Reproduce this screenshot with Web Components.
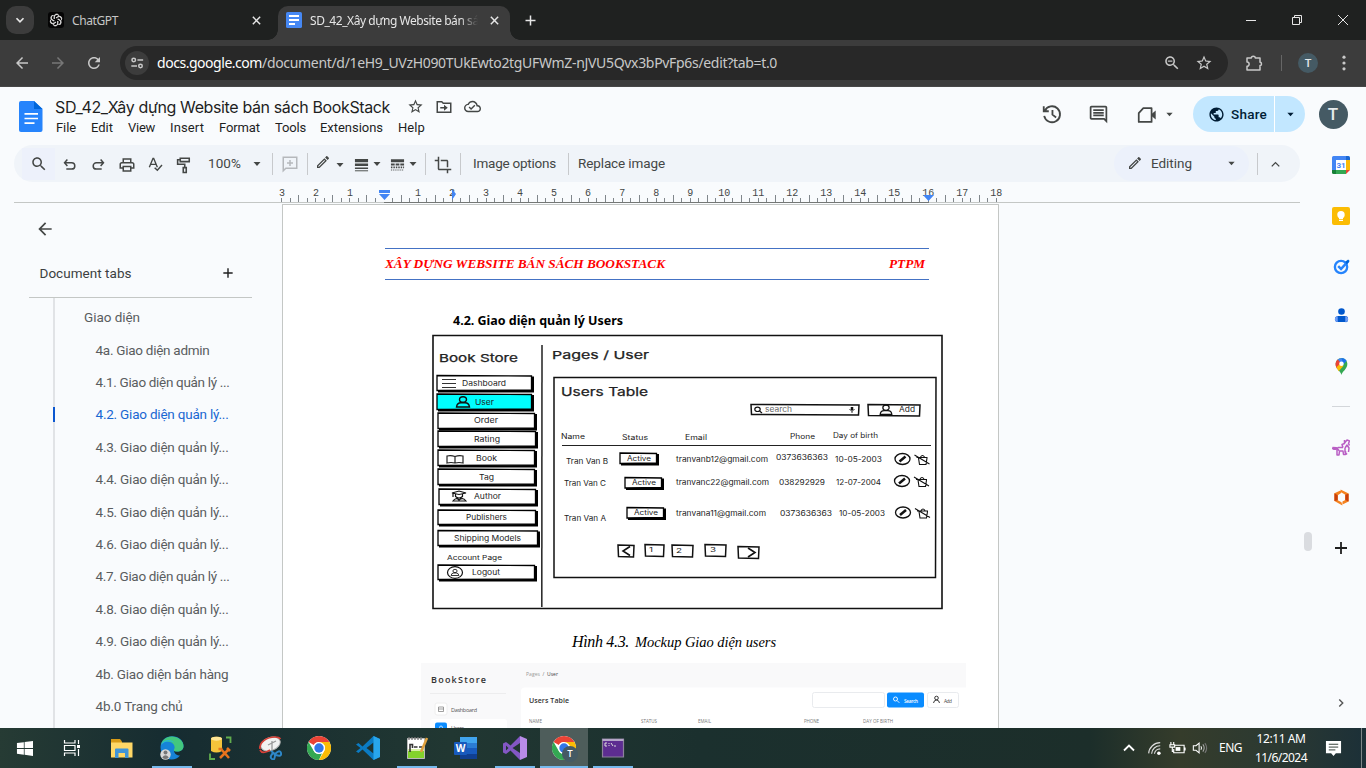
<!DOCTYPE html>
<html lang="vi"><head><meta charset="utf-8"><title>SD_42_Xây dựng Website bán sách BookStack</title>
<style>html,body{margin:0;height:768px;overflow:hidden;background:#f9fbfd}</style></head>
<body><desktop-app></desktop-app>
<script>
// Icon bodies: [viewBox size, markup]; "currentColor" follows the host colour.
const S='fill="none" stroke="currentColor" ';
const F=d=>`<path fill="currentColor" d="${d}"/>`;
const searchD='M15.5 14h-.79l-.28-.27C15.41 12.59 16 11.11 16 9.5 16 5.91 13.09 3 9.5 3S3 5.91 3 9.5 5.91 16 9.5 16c1.61 0 3.09-.59 4.23-1.57l.27.28v.79l5 4.99L20.49 19l-4.99-5zm-6 0C7.01 14 5 11.99 5 9.5S7.01 5 9.5 5 14 7.01 14 9.5 11.99 14 9.5 14z';
const chromeLogo=`<circle cx="12" cy="12" r="12" fill="#fff"/><path fill="#ea4335" d="M12 0a12 12 0 0 1 10.4 6H12a6 6 0 0 0-5.2 3L1.6 6A12 12 0 0 1 12 0z"/><path fill="#34a853" d="M1.6 6l5.2 9A6 6 0 0 0 12 18l3-.8L12 24A12 12 0 0 1 1.6 6z"/><path fill="#fbbc05" d="M22.4 6A12 12 0 0 1 12 24l5.2-9a6 6 0 0 0 0-6H12V6z"/><circle cx="12" cy="12" r="6" fill="#fff"/><circle cx="12" cy="12" r="4.7" fill="#3277e8"/>`;
const ICONS={
 chev:[24,`<path ${S} stroke-width="3" d="M6 9l6 6 6-6"/>`],
 up:[24,`<path ${S} stroke-width="2.2" d="M6 15l6-6 6 6"/>`],
 right:[24,`<path ${S} stroke-width="2.4" d="M9 6l6 6-6 6"/>`],
 down:[10,`<path fill="currentColor" d="M1.5 3h7L5 7z"/>`],
 x:[12,`<path ${S} stroke-width="1.6" d="M2 2l8 8M10 2l-8 8"/>`],
 plus:[24,`<path ${S} stroke-width="2.4" d="M12 4v16M4 12h16"/>`],
 gpt:[16,`<rect width="16" height="16" rx="3" fill="#050505"/><g fill="none" stroke="#ddd" stroke-width=".9">${[0,60,120,180,240,300].map(a=>`<path transform="rotate(${a} 8 8)" d="M8 6l1.9-1.1a2.5 2.5 0 0 1 3.2 3.6M6.2 7V4.6A2.4 2.4 0 0 1 10.5 3"/>`).join('')}</g>`],
 docfav:[16,`<rect width="16" height="16" rx="1.6" fill="#4688f4"/><path stroke="#fff" stroke-width="1.8" d="M3 4h10M3 8h10M3 12h6"/>`],
 docs:[32,`<path fill="#2684fc" d="M6 0h13l8.500 8v21a2 2 0 0 1-2 2H6a2 2 0 0 1-2-2V2a2 2 0 0 1 2-2z"/><path fill="#0066da" d="M19 0l8.500 8H19z"/><path stroke="#fff" stroke-width="1.700" d="M9.500 12.800H23M9.500 17.500H23M9.500 22.200H19.500"/>`],
 back:[24,F('M20 11H7.83l5.59-5.59L12 4l-8 8 8 8 1.410-1.410L7.830 13H20v-2z')],
 fwd:[24,`<g transform="matrix(-1 0 0 1 24 0)">${F('M20 11H7.830l5.590-5.590L12 4l-8 8 8 8 1.410-1.410L7.830 13H20v-2z')}</g>`],
 reload:[24,F('M17.650 6.350C16.200 4.900 14.210 4 12 4c-4.420 0-7.990 3.580-7.990 8s3.570 8 7.990 8c3.730 0 6.840-2.550 7.730-6h-2.080c-.820 2.330-3.040 4-5.650 4-3.310 0-6-2.690-6-6s2.690-6 6-6c1.660 0 3.140.690 4.220 1.780L13 11h7V4l-2.350 2.350z')],
 tune:[16,`<g ${S} stroke-width="1.700"><circle cx="4.300" cy="4.500" r="2"/><path d="M8.500 4.500H15M1.500 11.500H8"/><circle cx="12" cy="11.500" r="2"/></g>`],
 search:[24,F(searchD)],
 zoomout:[24,F(searchD)+`<path fill="currentColor" d="M6.500 8.700h6v1.600h-6z"/>`],
 star:[24,F('M22 9.240l-7.190-.620L12 2 9.190 8.630 2 9.240l5.460 4.730L5.820 21 12 17.270 18.180 21l-1.630-7.030L22 9.240zM12 15.400l-3.760 2.270 1-4.280-3.320-2.880 4.380-.380L12 6.100l1.710 4.040 4.380.380-3.320 2.880 1 4.280L12 15.400z')],
 puzzle:[18,`<path ${S} stroke-width="1.500" stroke-linejoin="round" d="M2 4h4.300a2 1.800 0 0 1 4 0H15v4.200a1.500 1.700 0 0 1 0 3.400V16H2v-3.700a2 2 0 0 0 0-4.300z"/>`],
 dots:[18,`<g fill="currentColor"><circle cx="9" cy="3.200" r="1.600"/><circle cx="9" cy="9" r="1.600"/><circle cx="9" cy="14.800" r="1.600"/></g>`],
 min:[12,`<path ${S} d="M1 6.500h10"/>`],
 restore:[12,`<path ${S} d="M1.500 3.500h7v7h-7zM3.500 3.500v-2h7v7h-2"/>`],
 close:[12,`<path ${S} d="M1 1l10 10M11 1L1 11"/>`],
 folder:[24,`<path ${S} stroke-width="2" d="M3 5h6l2 2h10v12H3z"/><path fill="currentColor" d="M7 12h5V9l5 4-5 4v-3H7z"/>`],
 cloud:[24,F('M19.350 10.040C18.670 6.590 15.640 4 12 4 9.110 4 6.600 5.640 5.350 8.040 2.340 8.360 0 10.910 0 14c0 3.310 2.690 6 6 6h13c2.760 0 5-2.240 5-5 0-2.640-2.050-4.780-4.650-4.960zM19 18H6c-2.210 0-4-1.790-4-4 0-2.050 1.530-3.760 3.560-3.970l1.070-.110.500-.950C8.080 7.140 9.940 6 12 6c2.620 0 4.880 1.860 5.390 4.430l.300 1.500 1.530.110c1.560.100 2.780 1.410 2.780 2.960 0 1.650-1.350 3-3 3zm-9-3.820l-2.090-2.090L6.500 13.500 10 17l6.010-6.010-1.410-1.410z')],
 history:[24,`<path ${S} stroke-width="2" d="M4.200 8.500A8.700 8.700 0 1 1 3.500 14M3 3.500V9h5.500M12.500 7.500v5.200l4 3"/>`],
 comment:[24,F('M21.990 4c0-1.100-.890-2-1.990-2H4c-1.100 0-2 .900-2 2v12c0 1.100.900 2 2 2h14l4 4-.010-18zM20 4v13.170L18.830 16H4V4h16zM6 12h12v2H6zm0-3h12v2H6zm0-3h12v2H6z')],
 video:[24,`<path ${S} stroke-width="1.900" stroke-linejoin="round" d="M8 4.500h9v15H3V10z"/><path fill="currentColor" d="M17 11l4.500-4v10L17 13z"/>`],
 globe:[24,F('M12 2C6.480 2 2 6.480 2 12s4.480 10 10 10 10-4.480 10-10S17.520 2 12 2zm-1 17.930c-3.950-.490-7-3.850-7-7.930 0-.620.080-1.210.210-1.790L9 15v1c0 1.100.900 2 2 2v1.930zm6.900-2.540c-.260-.810-1-1.390-1.900-1.390h-1v-3c0-.550-.450-1-1-1H8v-2h2c.550 0 1-.450 1-1V7h2c1.100 0 2-.900 2-2v-.410c2.930 1.190 5 4.060 5 7.410 0 2.080-.800 3.970-2.100 5.390z')],
 undo:[24,`<path ${S} stroke-width="2.100" d="M9 5L5 9.500 9 14M5.500 9.500H15a4.500 4.500 0 0 1 0 9H7.500"/>`],
 redo:[24,`<path ${S} stroke-width="2.100" d="M15 5l4 4.500-4 4.500M18.500 9.500H9a4.500 4.500 0 0 0 0 9h7.500"/>`],
 print:[24,F('M19 8h-1V3H6v5H5c-1.660 0-3 1.340-3 3v6h4v4h12v-4h4v-6c0-1.660-1.340-3-3-3zM8 5h8v3H8V5zm8 12v2H8v-4h8v2zm2-2v-2H6v2H4v-4c0-.550.450-1 1-1h14c.550 0 1 .450 1 1v4h-2z')],
 spell:[24,`<path ${S} stroke-width="2.100" d="M3.500 17L9 3.500h1L15.500 17M5.500 12.500h8M11.500 17.500l4 4 7-8"/>`],
 paint:[24,`<path ${S} stroke-width="2.100" d="M7 3h12v4.500H7zM7 5H3.500v6H13v4M11 15.500h4V22h-4z"/>`],
 addc:[24,`<path ${S} stroke-width="2" d="M3 21V3h18v14.500H6.500zM12 6.500v8M8 10.500h8"/>`],
 edit:[24,F('M14.060 9.020l.920.920L5.920 19H5v-.920l9.060-9.060M17.660 3c-.250 0-.510.100-.700.290l-1.830 1.830 3.750 3.750 1.830-1.830c.390-.390.390-1.020 0-1.410l-2.340-2.340c-.200-.200-.450-.290-.710-.290zm-3.600 3.190L3 17.250V21h3.750L17.810 9.940l-3.750-3.750z')],
 weight:[16,`<path stroke="currentColor" stroke-width="3.500" d="M1 3.800h14"/><path stroke="currentColor" stroke-width="2.500" d="M1 8.300h14"/><path stroke="currentColor" stroke-width="1.600" d="M1 12h14"/><path stroke="currentColor" d="M1 14.700h14"/>`],
 dash:[16,`<path stroke="currentColor" stroke-width="3" d="M1 4h14"/><path stroke="currentColor" stroke-width="2" stroke-dasharray="4 1" d="M1 8h14"/><path stroke="currentColor" stroke-width="1.800" stroke-dasharray="1.600 1" d="M1 11h14"/><path stroke="currentColor" stroke-width="1.200" stroke-dasharray="1 1" d="M1 13.800h14"/>`],
 crop:[24,F('M17 15h2V7c0-1.100-.900-2-2-2H9v2h8v8zM7 17V1H5v4H1v2h4v10c0 1.100.900 2 2 2h10v4h2v-4h4v-2H7z')],
 cal:[18,`<path fill="#4285f4" d="M0 1.500A1.500 1.500 0 0 1 1.500 0H14v4H4v10H0z"/><path fill="#1967d2" d="M14 0h2.500A1.500 1.500 0 0 1 18 1.500V4h-4z"/><path fill="#fbbc04" d="M14 4h4v10h-4z"/><path fill="#34a853" d="M4 14h10v4H4z"/><path fill="#188038" d="M0 14h4v4H1.500A1.500 1.500 0 0 1 0 16.500z"/><path fill="#ea4335" d="M14 14h4l-4 4z"/><path fill="#fff" d="M4 4h10v10H4z"/><text x="9" y="12" text-anchor="middle" font-family="Roboto,sans-serif" font-weight="700" font-size="8" fill="#4285f4">31</text>`],
 keep:[18,`<rect width="18" height="18" rx="2" fill="#fbbc04"/><circle cx="9" cy="7.800" r="3.700" fill="#fff"/><path fill="#fff" d="M7 10h4v2H7zM7 12.700h4V14H7z"/>`],
 tasks:[18,`<circle cx="8.500" cy="9.500" r="6.500" fill="none" stroke="#2684fc" stroke-width="2.500"/><path fill="none" stroke="#2684fc" stroke-width="2.600" d="M5.500 8.500l3 3L16 3.500"/><path fill="#0066da" d="M13 4l3-2.500 1.700 1.700L14.500 7z"/>`],
 contact:[18,`<circle cx="9" cy="4.700" r="3.500" fill="#0057cc"/><path fill="#0057cc" d="M5 9.500h8q3 0 3 3.500t-3 3H5q-3 0-3-3t3-3.500z"/><path fill="#6f9df6" d="M5 9.700q-3 .500-3 3.300t3 3zM13 9.700q3 .500 3 3.300t-3 3z"/>`],
 maps:[18,`<path fill="#34a853" d="M9 18C8.500 14.500 2.800 12 2.800 6.200a6.200 6.200 0 0 1 12.400 0C15.200 12 9.500 14.500 9 18z"/><path fill="#4285f4" d="M5 1.700A6.200 6.200 0 0 1 14.300 3L9 8.500z"/><path fill="#ea4335" d="M5 1.700L9 6.200 4 11C1.800 7.600 2.500 4 5 1.700z"/><path fill="#fbbc04" d="M3.600 9.800L8 5.500l3 3-5 5.500z"/><path fill="#1a73e8" d="M9 0a6.200 6.200 0 0 1 5.300 3L11 7z"/><circle cx="9" cy="6.200" r="2.400" fill="#fff"/>`],
 unicorn:[18,`<path fill="none" stroke="#b95fc4" stroke-width="1.500" stroke-linejoin="round" d="M11 9.500L10 6.500l2.500-1L12.500 2M12.500 5L15 2l2.500 1-1 2.500 1 2M13 10l2-3 2 3-.500 4M13 10v4l2 2.500M11 9.500H6L5 12v5h2l.500-4H11l.500 3.500h2V13M5 10.500Q1 12.500 0 9.500M.500 9.500l4 .300L7 12.500"/>`],
 hex:[18,`<path fill="#f5821f" d="M1.500 4.500L9 1v3L5 6.500v5.300l4 2.200 1 3.500-8.500-4.700zM16.500 13.300L10 16.500v-3.300l3-1.500V6L9.500 4 8 .500l8.500 4.300z"/><path fill="#c93f0b" d="M1.500 4.500l3.500 2v5.300l-3.500 1zM16.500 5L13 6v5.700l3.500 1.600z"/>`],
 win:[18,`<path fill="#fff" d="M1 3.300l7.300-1v6.200H1zM9.100 2.200L18 1v7.500H9.100zM1 9.400h7.300v6.200l-7.300-1zM9.100 9.400H18V17l-8.900-1.300z"/>`],
 taskview:[18,`<g fill="none" stroke="#fff" stroke-width="1.200"><path d="M1.500 1v3H12V1M1.500 6.500H12v5H1.500zM1.500 17v-3H12v3M15.500 1v4M15.500 10v7"/></g><path fill="#fff" d="M14 6h3v3h-3z"/>`],
 explorer:[24,`<path fill="#d99b16" d="M1 3h9l2 2.500v4H1z"/><path fill="#ffd766" d="M1 6.500h21.500v15H1z"/><path fill="#3f94d8" d="M5 22v-8.500q0-1 1-1h11.500q1 0 1 1V22H15v-5H8.500v5z"/>`],
 edge:[24,`<path fill="#1683d8" d="M.500 11C1 4 6 .300 12 .300 19 .300 23.500 5 23.500 10c0 4-3 5.500-6.500 5.500-2.500 0-3-1-3-1.500 0 4 3 5.500 6 5.500q-3 4-8.500 4C5 23.500.500 18 .500 11z"/><path fill="#43c77d" d="M7 1.500C14-1.500 23.500 3 23.500 10c0 4-3 5.500-6 5.500S13.500 15 14 13.500c2-3.500-1-8-7-8-3 0-5 1.500-6 3.500C1.500 5.500 4 2.600 7 1.500z"/><path fill="#26b9d5" d="M2 7C5 3 12 3 14.500 7 10 3.500 3.500 6 1 9z"/><circle cx="5.500" cy="18.500" r="5.200" fill="#d8d8d8"/><circle cx="5.500" cy="16.500" r="2" fill="#777"/><path fill="#777" d="M2.200 21.500q3.300-4.500 6.600 0-3.300 3-6.600 0z"/>`],
 ssms:[24,`<path fill="#f5c33b" d="M2 2.500C2 0 13 0 13 2.500V15q-5.500 3-11 0z"/><ellipse cx="7.500" cy="2.700" rx="5.500" ry="2" fill="#ffe596"/><path fill="none" stroke="#61ad4e" stroke-width="1.800" d="M17 1.500h4.500V7M1 17.500V23h5"/><path fill="none" stroke="#e8731d" stroke-width="2.500" d="M11 22l9-9M12 13l8 9M9.500 13h4M18 12l3 3"/>`],
 snip:[24,`<ellipse cx="12.500" cy="8" rx="10" ry="6.500" transform="rotate(-20 12.500 8)" fill="#f1f1f1" stroke="#b9b9b9"/><path fill="none" stroke="#d64037" stroke-width="1.700" d="M2 14C4 18 9 16 12 14M2 13C1 6 9 1 17 1q4 0 5.500 2"/><path fill="none" stroke="#999" stroke-width="1.300" d="M14 5v9M10 9l8-4"/><path fill="none" stroke="#2d87c8" stroke-width="2" d="M13 15l4 3q5-5 6-1t-5 2l-3-2q-4 4-1 6t3-5"/>`],
 chrome:[24,chromeLogo],
 vscode:[24,`<path fill="#0b7bc3" d="M17.500 0L24 3v18l-6.500 3L6.500 13.500 2.500 17 0 15.500 4.500 12 0 8.500 2.500 7l4 3.500zM17.500 6.500L10.500 12l7 5.500z"/><path fill="#28a6ec" d="M17.500 0L24 3v18l-6.500 3z"/>`],
 npp:[24,`<path fill="#fff" stroke="#bbb" d="M2.500 2.500h17v20h-17z"/><path fill="#83d32c" d="M3 13h16v9H3z"/><path fill="#d8f0a7" d="M3 13h16v2H3z"/><path fill="none" stroke="#777" stroke-width="1.300" d="M4 1v3M7 1v3M10 1v3M13 1v3M16 1v3"/><path fill="none" stroke="#333" stroke-width="1.600" d="M5 16V8.500h2.500v3.500M9 11h3.500M14 11h3.500"/><path stroke="#e0a13e" stroke-width="2.500" d="M16 16L22 2"/>`],
 word:[24,`<path fill="#2b7cd3" d="M6 1h17v22H6z"/><path fill="#41a5ee" d="M6 1h17v6H6z"/><path fill="#185abd" d="M6 12h17v6H6z"/><path fill="#103f91" d="M6 18h17v5H6z"/><rect y="6" width="13" height="13" rx="1" fill="#185abd"/><text x="6.500" y="16" text-anchor="middle" font-family="Open Sans,sans-serif" font-size="10" font-weight="700" fill="#fff">W</text>`],
 vs:[24,`<path fill="#8357c5" d="M17 0L7.500 9.500 3 6 0 7.500v9L3 18l4.500-3.500L17 24V17L9.500 12 17 7zM3 14.500v-5L5.500 12z"/><path fill="#b98ce9" d="M17 0l7 3v18l-7 3z"/>`],
 cmd:[24,`<path fill="#5d2d91" stroke="#8c829b" stroke-width="1.200" d="M1.500 3h21v18h-21z"/><path fill="#b5a6c9" d="M1.500 3h21v2h-21z"/><path stroke="#ddd" fill="none" d="M6 7H4v3h2M8 7v1M8 9v1M10 7l2 3M13 10h2"/>`],
 wifi:[18,`<g fill="none" stroke="#ddd" stroke-width="1.300"><path d="M3 15A13 13 0 0 1 16 3M6.300 15.500A9.500 9.500 0 0 1 16 6.500M9.500 15.500A6.500 6.500 0 0 1 16 10"/></g><circle cx="14.500" cy="15" r="2" fill="#fff"/>`],
 batt:[18,`<g fill="none" stroke="#fff" stroke-width="1.200"><path d="M6 5.500h10v8H5v-4M2 2v3M5 2v3M1 5h5v2.500H1zM3.500 8v4H5M17 8v3"/></g><path fill="#fff" d="M7 7.500h5v4H7z"/>`],
 vol:[18,`<g fill="none" stroke="#fff" stroke-width="1.200"><path d="M1.500 6.500h3l3.500-3v11l-3.500-3h-3z"/><path d="M10 7q1.500 2 0 4"/><path stroke="#aaa" d="M12.200 5q3 4 0 8"/><path stroke="#777" d="M14.500 3.500q4 5.500 0 11"/></g>`],
 note:[18,`<path fill="#fff" d="M1 1h16v13h-5.500L9 17l-2.500-3H1z"/><path stroke="#2b3730" d="M4 4.500h10M4 7.500h10M4 10.500h7"/>`]
};
// Lays items on one flex line: [left, width, markup, vertical shift]; gaps become margins.
const row=(start,items)=>{let p=start;return items.map(([x,w,h,dy=0])=>{const m=x-p;p=x+w;return `<span class="cell" style="margin-left:${m}px;width:${w}px;margin-top:${dy*2}px">${h}</span>`}).join('')};
const ic=(cx,n,s=18,dy=0,extra='')=>[cx-s/2,s,`<ui-icon name="${n}" style="width:${s}px;height:${s}px;${extra}"></ui-icon>`,dy];
const tx=(x,w,t,dy=0,extra='')=>[x,w,`<fit-text w="${w}" style="${extra}">${t}</fit-text>`,dy];
const rule=(x,h,c)=>[x,1,`<i style="display:block;width:1px;height:${h}px;background:${c}"></i>`];
const BASE=`:host{display:flex;align-items:center;box-sizing:border-box;flex:none;overflow:hidden}.cell{display:flex;flex:none;align-items:center;white-space:nowrap}`;
const def=(name,css,html)=>customElements.define(name,class extends HTMLElement{
  constructor(){super();this.attachShadow({mode:'open'}).innerHTML=`<style>${BASE}${css}</style>${typeof html==='function'?'':html}`}
  connectedCallback(){if(typeof html==='function'&&!this.done){this.done=1;this.shadowRoot.innerHTML=`<style>${BASE}${css}</style>`+html(this)}}
});
customElements.define('ui-icon',class extends HTMLElement{
  connectedCallback(){if(this.shadowRoot)return;const [v,b]=ICONS[this.getAttribute('name')];
    this.attachShadow({mode:'open'}).innerHTML=`<style>:host{display:block;flex:none}svg{display:block;width:100%;height:100%}</style><svg viewBox="0 0 ${v} ${v}">${b}</svg>`}
});
// Text that tracks its letters so that the line has the given width.
customElements.define('fit-text',class extends HTMLElement{
  connectedCallback(){if(this.shadowRoot)return;
    this.attachShadow({mode:'open'}).innerHTML=`<style>:host{display:inline-block;white-space:pre;flex:none}</style><slot></slot>`;
    const w=+this.getAttribute('w'),n=[...this.textContent].length,r=this.getBoundingClientRect().width;
    if(w&&r)this.style.letterSpacing=((w-r)/n).toFixed(3)+'px'}
});
const avatar=(cx,r,fs,dy=0)=>[cx-r,r*2,`<span class="av" style="width:${r*2}px;height:${r*2}px;font-size:${fs}px">T</span>`,dy];
const AV=`.av{display:flex;align-items:center;justify-content:center;border-radius:50%;background:#455a64;color:#e6eaec;font-family:Roboto,sans-serif;font-weight:500}`;

def('tab-strip',`:host{height:40px;background:#1f2120;color:#e6e6e6;font:12px "Noto Sans",sans-serif}
.menu{width:28px;height:28px;border-radius:10px;background:#3c3c3c;display:flex;align-items:center;justify-content:center}
.tab{width:232px;height:34px;margin-top:6px;background:#3c3c3c;border-radius:10px 10px 0 0;display:flex;align-items:center}
.name{width:168px;overflow:hidden;-webkit-mask:linear-gradient(90deg,#000 150px,transparent 168px)}
.foot{width:10px;height:10px;margin-top:30px}`,
 row(0,[[6,28,`<span class="menu"><ui-icon name="chev" style="width:14px;height:14px"></ui-icon></span>`],ic(56,'gpt',16),tx(72,46,'ChatGPT',0,'color:#c7c7c7'),ic(256,'x',11),
 [268,10,`<i class="foot" style="background:radial-gradient(circle at 0 0,#1f2120 9.500px,#3c3c3c 10px)"></i>`],
 [278,232,`<span class="tab">${row(278,[ic(294,'docfav',16,-3),[310,168,`<span class="name"><fit-text w="181">SD_42_Xây dựng Website bán sách</fit-text></span>`,-3],ic(494,'x',11,-3)])}</span>`],
 [510,10,`<i class="foot" style="background:radial-gradient(circle at 10px 0,#1f2120 9.500px,#3c3c3c 10px)"></i>`],
 ic(530,'plus',15),ic(1251,'min',12),ic(1297,'restore',12),ic(1343,'close',12)]));

def('address-bar',`:host{height:47px;background:#3c3c3c;color:#c8c8c8;font:14px "Noto Sans",sans-serif;border-bottom:1px solid #474747}
${AV}.omni{width:1108px;height:34px;border-radius:17px;background:#282828;display:flex;align-items:center}
.chip{width:24px;height:24px;border-radius:50%;background:#3c3c3c;display:flex;align-items:center;justify-content:center}`,
 row(0,[ic(22,'back',18),ic(58,'fwd',18,0,'color:#777'),ic(94,'reload',18),
 [120,1108,`<span class="omni">${row(120,[[125,24,`<span class="chip"><ui-icon name="tune" style="width:14px;height:14px"></ui-icon></span>`],tx(157,105,'docs.google.com',-1,'color:#fff'),tx(262,515,'/document/d/1eH9_UVzH090TUkEwto2tgUFWmZ-nJVU5Qvx3bPvFp6s/edit?tab=t.0',-1),ic(1172,'zoomout',18),ic(1204,'star',18)])}</span>`],
 ic(1254,'puzzle',18),rule(1281,16,'#666'),avatar(1308,10,11),ic(1344,'dots',18)]));

const MENUS=[[56,20,'File'],[91,22,'Edit'],[128,27,'View'],[170,34,'Insert'],[219,41,'Format'],[275,31,'Tools'],[320,63,'Extensions'],[398,27,'Help']];
def('docs-header',`:host{height:58px;color:#444746;font-family:Inter,sans-serif}
${AV}.col{display:flex;flex-direction:column;width:600px;height:58px;flex:none}
.t,.m{display:flex;align-items:center}.t{height:23px;margin-top:8px;font-size:16px;color:#1f1f1f}.m{height:18px;font:13px Roboto,sans-serif;color:#1f1f1f}
.share{display:flex;height:36px;width:112px;border-radius:18px;background:#c2e7ff;color:#001d35;align-items:center;overflow:hidden;font:500 13.500px Roboto,sans-serif}`,
 row(0,[[15,32,`<ui-icon name="docs" style="width:32px;height:32px"></ui-icon>`,1],
 [55,600,`<div class="col"><div class="t">${row(55,[tx(55,335,'SD_42_Xây dựng Website bán sách BookStack'),ic(415,'star',17,0,'color:#444746'),ic(444,'folder',18,0,'color:#444746'),ic(472,'cloud',17,0,'color:#444746')])}</div>
 <div class="m">${row(55,MENUS.map(a=>tx(...a)))}</div></div>`],
 ic(1052,'history',22,-2),ic(1098,'comment',21,-2),ic(1147,'video',22,-1),ic(1169,'down',9,-2),
 [1193,112,`<span class="share">${row(1193,[ic(1216,'globe',17),tx(1231,36,'Share'),[1274,1,'<i style="display:block;width:1px;height:36px;background:#fff"></i>'],ic(1290,'down',9)])}</span>`,-2],
 avatar(1333,14.5,17,-2)]));

def('docs-toolbar',`:host{width:1286px;height:37px;margin-left:14px;border-radius:19px;background:#f0f4f9;color:#444746;font:13.500px Roboto,sans-serif}
.ed{display:flex;align-items:center;width:135px;height:35px;background:#ecf1fb;border-radius:18px}.s{display:flex;justify-content:center;align-items:center;width:33px;height:32px;background:#edf1fb}`,
 row(14,[[22,33,`<span class="s"><ui-icon name="search" style="width:18px;height:18px"></ui-icon></span>`],ic(69,'undo',17,.5),ic(98,'redo',17,.5),ic(127,'print',18,1),ic(155,'spell',16,0),ic(184,'paint',18,1),tx(208,33,'100%',-.5),ic(257,'down',10,.5),rule(272,22,'#c7c9cc'),ic(290,'addc',18,0,'color:#b5b8bc'),rule(307,22,'#c7c9cc'),ic(323,'edit',16,-1.5),ic(340,'down',10,1.5),ic(361,'weight',15,1),ic(377,'down',10,.5),ic(397,'dash',15,1),ic(413,'down',10,.5),rule(425,22,'#c7c9cc'),ic(443,'crop',18,1),rule(460,22,'#c7c9cc'),tx(473,83,'Image options',-.5),rule(568,22,'#c7c9cc'),tx(578,87,'Replace image',-.5),
 [1114,135,`<span class="ed">${row(1114,[ic(1135,'edit',16,-.5),tx(1151,41,'Editing',-.5),ic(1231,'down',9)])}</span>`],rule(1257,22,'#c7c9cc'),ic(1275,'up',15,1)]));

// Ruler: one centimetre is 34.02px, zero at x=384.
const U=34.02;
def('docs-ruler',`:host{height:21px;width:1300px}svg{display:block}`,()=>{let s='';
 for(let q=-12;q<=72;q++){if(q==0)continue;const x=384.500+q*U/4;s+=`<path stroke="#80868b" d="M${Math.round(x)-.500} ${q%4==2||q%4==-2?13:16}V20"/>`}
 for(let i=-3;i<=18;i++)if(i)s+=`<text x="${384+i*U}" y="14" text-anchor="middle">${Math.abs(i)}</text>`;
 return `<svg width="1300" height="21" viewBox="0 0 1300 21" font-family="Liberation Mono,monospace" font-size="10" fill="#444746"><path stroke="#c4c7c5" d="M14 20.500H1300"/><path stroke="#747775" d="M384 20.500H929"/>${s}<g fill="#4285f4"><path d="M379 8h11v3h-11zM379 12h11l-5.500 6zM452 7l4 5-4 6zM923 13h11l-5.500 6z"/></g></svg>`});

def('outline-item',`:host{height:32.400px;width:252px;color:#5a5d5f}:host([on]){color:#1967d2}`,e=>{const x=+e.getAttribute('x')||95.5;return `<i style="width:2px;height:100%;margin-left:53px;background:#e1e3e6;display:flex;align-items:center;flex:none">${e.hasAttribute('on')?'<b style="width:2px;height:15px;background:#0b57d0"></b>':''}</i>`+row(55,[tx(x,+e.getAttribute('w'),e.getAttribute('label'))])});
def('outline-panel',`:host{display:block;width:282px;height:525px;color:#444746;font:13.500px Roboto,sans-serif}.r{display:flex;align-items:center}.tail{width:2px;height:10px;margin-left:53px;background:#e1e3e6}`,
 `<div class="r" style="height:50px">${row(0,[ic(45,'back',20)])}</div><div class="r" style="height:38px;margin-bottom:5px">${row(0,[tx(39.5,92,'Document tabs',0,'color:#3c3f41'),ic(228,'plus',14,0,'color:#1f1f1f')])}</div><div style="height:1px;width:223px;margin-left:29px;background:#c4c7c5"></div><outline-item x="84" w="56" label="Giao diện" style="height:38px"></outline-item><div style="margin-top:-2.500px">`+
 [['4a. Giao diện admin',114],['4.1. Giao diện quản lý ...',134],['4.2. Giao diện quản lý...',133],['4.3. Giao diện quản lý...',133],['4.4. Giao diện quản lý...',133],['4.5. Giao diện quản lý...',133],['4.6. Giao diện quản lý...',133],['4.7. Giao diện quản lý ...',134],['4.8. Giao diện quản lý...',133],['4.9. Giao diện quản lý...',133],['4b. Giao diện bán hàng',133],['4b.0 Trang chủ',87]].map(([l,w],i)=>`<outline-item label="${l}" w="${w}" ${i==2?'on':''}></outline-item>`).join('')+'<div class="tail"></div></div>');

// Wireframe illustration embedded in the document.
def('wireframe-figure',`:host{display:block;width:525px;height:285px}svg{display:block}`,()=>{
 const T=(x,y,w,t,s=7.5,f='#222')=>`<text x="${x}" y="${y}" font-size="${s}" fill="${f}" textLength="${w}" lengthAdjust="spacingAndGlyphs">${t}</text>`;
 const B=(x,y,x2,y2,f='#fff',sh=3)=>`<path fill="#000" d="M${x+1} ${y+1}H${x2+1}V${y2+1.500}H${x+1}z"/><path fill="${f}" stroke="#000" stroke-width="1.300" d="M${x} ${y}L${x2-sh/2} ${y+.500}V${y2-1}L${x} ${y2-.500}z"/>`;
 const R=(x,y,x2,y2)=>`<path fill="#fff" stroke="#111" stroke-width="1.500" d="M${x} ${y}L${x2} ${y+.500}L${x2-.500} ${y2}L${x+.500} ${y2-.500}z"/>`;
 const P=(x,y,s=1)=>`<g transform="translate(${x} ${y}) scale(${s})" fill="none" stroke="#111" stroke-width="1.400"><ellipse cy="-2.500" rx="3.500" ry="2.800"/><path d="M-6.500 5Q-6 .800-2 .800H2Q6 .800 6.500 5z"/></g>`;
 const act=(x,y)=>`<g fill="none" stroke="#111" stroke-width="1.300"><ellipse cx="${x}" cy="${y}" rx="7.500" ry="5.500"/><path stroke-width="2.500" d="M${x-3} ${y+2.500}L${x+3} ${y-2.500}"/><path stroke-width="1.100" d="M${x+12} ${y-4}L${x+27} ${y+5}M${x+14} ${y-1.500}H${x+25}M${x+16} ${y-1}L${x+17} ${y+5.500}H${x+23.500}L${x+24.500} ${y-1}M${x+18} ${y-2}q2-3 4 0"/></g>`;
 return `<svg width="525" height="285" viewBox="425 330 525 285" font-family="Inter,sans-serif">
 <path fill="#fff" stroke="#111" stroke-width="1.600" d="M433 335.500H942V608.500H433z"/><path stroke="#222" stroke-width="1.500" d="M542 345L541.800 607"/>
 <g stroke="#222" stroke-width=".25">${T(439,361.5,79,'Book Store',11)}${T(552,358.500,97,'Pages / User',11)}${T(561,395.500,87,'Users Table',11.500)}</g>
 <path fill="none" stroke="#111" stroke-width="1.500" d="M554 377.500L936 377.500L935.500 577.500H554z"/>
 ${B(437,375.500,533,391)}${B(437,394,533,410,'#00ffff')}${B(438,413,536,429)}${B(438,431,537,447)}${B(438,450,536,466)}${B(438,469,536,485)}${B(439,489,537,505)}${B(438,510,537,525)}${B(438,530.500,539,546)}${B(438,565,536,580)}
 <path stroke="#333" d="M442 379.500h14M442 383.500h14M442 387.500h14"/>
 ${T(462,386,44,'Dashboard')}${P(463,402)}${T(475,405,19,'User')}${T(474,423,24,'Order')}${T(474,441.500,26,'Rating')}<path fill="none" stroke="#222" stroke-width="1.200" d="M447 456q4-1 8 .500 4-1.500 8-.500v7q-4-1-8 0-4-1-8 0zM455 456.500v7"/>
 ${T(476,460.500,21,'Book')}${T(479,479.500,15,'Tag')}<path fill="none" stroke="#111" stroke-width="1.200" d="M452 493l7-2 7 2-7 1.500zM455.500 494v2.500q3.500 3 7 0V494M453 501q3-4 6-1 4-3 7 1zM453 493v4"/>
 ${T(474,499,27,'Author')}${T(466,519.500,41,'Publishers')}${T(454,541,67,'Shipping Models')}${T(447,560,55,'Account Page',6.800)}
 <ellipse cx="455" cy="572.500" rx="7.500" ry="5.800" fill="none" stroke="#111" stroke-width="1.200"/>${P(455,572.500,.600)}${T(472,575,28,'Logout')}
 ${R(751,404.500,859,415)}<g fill="none" stroke="#111" stroke-width="1.200"><ellipse cx="757.500" cy="409.300" rx="2.700" ry="2.200"/><path d="M759.500 411l2.500 2"/><path stroke-width="2.500" d="M852 407v3"/><path stroke-width=".800" d="M849.500 409q2.500 4 5 0M852 411v2"/></g>${T(765,412,27,'search',7.5,'#666')}
 ${R(868,404.500,920,416)}${P(886,410,.900)}${T(899,412,16,'Add')}
 ${T(561,439,24,'Name',7)}${T(622,439.500,26,'Status',7)}${T(685,439.500,22,'Email',7)}${T(790,439,25,'Phone',7)}${T(833,438,45,'Day of birth',7)}
 <path stroke="#222" stroke-width="1.200" d="M562 445.500H931"/>
 ${[['Tran Van B',566,464,620,453,'tranvanb12@gmail.com',676,461.500,92,'0373636363',776,460,52,'10-05-2003',835,461.500,47,902.500,459],['Tran Van C',564,485.500,625,477.500,'tranvanc22@gmail.com',676,485,93,'038292929',779,485,46,'12-07-2004',836,485,45,902,481],['Tran Van A',564,520.500,627,507.500,'tranvana11@gmail.com',676,515.500,90,'0373636363',780,515.500,52,'10-05-2003',839,515.500,46,903,512.500]].map(a=>T(a[1],a[2],42,a[0])+B(a[3],a[4],a[3]+38,a[4]+11)+T(a[3]+7,a[4]+7.500,24,'Active',7)+T(a[6],a[7],a[8],a[5])+T(a[10],a[11],a[12],a[9])+T(a[14],a[15],a[16],a[13])+act(a[17],a[18])).join('')}
 ${R(618,545,634,557)}${R(645,544.500,664,556.500)}${R(672,545,693,557)}${R(705,544.500,726,556.500)}${R(738,546.500,759,558.500)}
 <path fill="none" stroke="#111" stroke-width="1.600" d="M630 546.500l-7 4.500 7 4.500M748 548l7 4.500-7 4.500"/>${T(649,552,4,'1',6.500)}${T(676,553,6,'2',6.500)}${T(710,552,6,'3',6.500)}</svg>`});

def('shop-figure',`:host{display:block;width:545px;height:65px;background:#f9f9fa}svg{display:block}`,()=>{
 const T=(x,y,w,t,s,f='#333',b=400)=>`<text x="${x}" y="${y}" font-size="${s}" font-weight="${b}" fill="${f}" textLength="${w}">${t}</text>`;
 return `<svg width="545" height="65" viewBox="421 663 545 65" font-family="Open Sans,sans-serif">
 ${T(431,683,55,'BookStore',9,'#333',600)}<path stroke="#ededee" d="M430 693.500H506"/><rect x="435" y="703" width="12" height="12" rx="2" fill="#fff" stroke="#eee"/><path stroke="#777" fill="none" stroke-width=".700" d="M438.500 707h5v4.500h-5zM438.500 709h5"/>${T(451,711.500,26,'Dashboard',5.500,'#555')}
 <rect x="430" y="719" width="77" height="20" rx="3" fill="#fff"/><rect x="435" y="722.500" width="12" height="12" rx="2" fill="#0a8cff"/><circle cx="441" cy="727.500" r="1.500" fill="none" stroke="#fff" stroke-width=".700"/>${T(451,730,13,'Users',5.500,'#555')}
 ${T(526,675.500,14,'Pages',5,'#999')}${T(542.500,675.500,2,'/',5,'#777')}${T(547,675.500,11,'User',5,'#444')}
 <rect x="521" y="687.500" width="449" height="60" rx="4" fill="#fff"/>${T(529,702.500,40,'Users Table',7,'#333',600)}
 <rect x="812.500" y="692.500" width="72" height="15" rx="2" fill="#fff" stroke="#e9ebee"/><rect x="887" y="692.500" width="37" height="15" rx="2" fill="#0a8cff"/><circle cx="895.500" cy="699" r="2" fill="none" stroke="#fff" stroke-width=".900"/><path stroke="#fff" stroke-width=".900" d="M897 700.500l2.300 2.300"/>${T(904,702.500,14,'Search',4.800,'#fff',600)}
 <rect x="927.500" y="692.500" width="31" height="15" rx="2" fill="#fff" stroke="#e9ebee"/><circle cx="936.500" cy="698" r="1.800" fill="none" stroke="#222" stroke-width=".900"/><path fill="none" stroke="#222" stroke-width=".900" d="M933.500 703q.500-3 3-3t3 3"/>${T(944,702.500,8,'Add',4.800,'#444')}
 ${T(529,723,13,'NAME',4.500,'#777')}${T(641,723,16,'STATUS',4.500,'#777')}${T(698,723,13,'EMAIL',4.500,'#777')}${T(804,723,15,'PHONE',4.500,'#777')}${T(863,723,30,'DAY OF BIRTH',4.500,'#777')}</svg>`});

def('doc-page',`:host{display:block;width:717px;height:524px;background:#fff;border:1px solid #c4c7c5;border-bottom:0;color:#000}
.head{margin:43px 69px 0 102px;height:30px;border-top:1px solid #4472c4;border-bottom:1px solid #4472c4;display:flex;align-items:center;font:italic 700 13.300px "Liberation Serif",serif;color:#f00}
h2{margin:30px 0 0 170px;height:20px;display:flex;align-items:center;font:700 12.500px "Noto Sans",sans-serif}
wireframe-figure{margin:0 0 0 142px}p{margin:17px 0 0 289px;height:20px;display:flex;align-items:center;font:italic 15.500px "Liberation Serif",serif}shop-figure{margin:11px 0 0 138px}`,
 `<div class="head">${row(385,[tx(385,280,'XÂY DỰNG WEBSITE BÁN SÁCH BOOKSTACK'),tx(889,36,'PTPM')])}</div><h2>${row(453,[tx(453,170,'4.2. Giao diện quản lý Users')])}</h2><wireframe-figure></wireframe-figure><p>${row(572,[tx(572,57,'Hình 4.3.',0,'font-size:16px'),tx(635,141,'Mockup Giao diện users',.5,'font-size:14.500px')])}</p><shop-figure></shop-figure>`);

def('side-rail',`:host{display:flex;flex-direction:column;width:18px;margin-right:16px;color:#1f1f1f;overflow:visible;justify-content:flex-start}`,
 (()=>{let p=145;return [['cal',165,18],['keep',216,18],['tasks',266,17],['contact',315.5,17],['maps',366.5,17],['',406.5,1],['unicorn',447,18],['hex',497.5,17],['plus',548,18],['right',703,14]].map(([n,c,s])=>{const m=c-s/2-p;p=c+s/2;return n?`<ui-icon name="${n}" style="width:${s}px;height:${s}px;margin-top:${m}px${n=='right'?';color:#555':''}"></ui-icon>`:`<i style="display:block;width:18px;height:1px;background:#d3d6da;margin-top:${m}px"></i>`}).join('')})());

def('docs-workspace',`:host{display:flex;height:583px;align-items:stretch}.left{width:1332px;flex:none}.c{display:flex}.bar{width:8px;height:19px;border-radius:4px;background:#dadce0;margin:328px 0 0 305px}`,
 `<div class="left"><docs-toolbar></docs-toolbar><docs-ruler></docs-ruler><div class="c" style="margin-top:1px"><outline-panel></outline-panel><doc-page></doc-page><div class="bar"></div></div></div><side-rail></side-rail>`);

const app=(cx,n,on)=>[cx-20,40,`<span class="app ${on||''}"><ui-icon name="${n}" style="width:24px;height:24px"></ui-icon></span>`];
def('task-bar',`:host{height:40px;background:linear-gradient(90deg,#263b34 0,#162c31 170px,#213732 450px,#1b302e 700px,#1c2e2a 1090px,#353c2b 1180px,#2b3932 1280px,#1c3038 1366px);color:#fff;font:12px "Noto Sans",sans-serif}
.app{display:flex;width:40px;height:40px;box-sizing:border-box;align-items:center;justify-content:center}.on{border-bottom:2px solid #76b9ed;padding-top:2px}
.big{display:flex;position:relative;width:48px;height:40px;box-sizing:border-box;align-items:center;justify-content:center;background:#4e5d5b;border-bottom:2px solid #76b9ed;padding-top:2px}
.badge{position:absolute;left:22px;top:18px;width:16px;height:16px;border-radius:50%;background:#455a64;font:500 9px/16px Roboto,sans-serif;text-align:center}
.clock{display:flex;flex-direction:column;align-items:center;line-height:19px;width:52px;margin-top:-1px}`,
 row(0,[ic(24,'win',17),ic(71.5,'taskview',18),app(122,'explorer'),app(172,'edge','on'),app(221,'ssms'),app(270,'snip'),app(319,'chrome'),app(368,'vscode'),app(416.500,'npp','on'),app(465.500,'word'),app(515,'vs','on'),
 [540,48,`<span class="big"><ui-icon name="chrome" style="width:24px;height:24px"></ui-icon><span class="badge">T</span></span>`],app(613,'cmd','on'),
 ic(1129,'up',20),ic(1154,'wifi',16),ic(1177,'batt',17),ic(1200,'vol',16),tx(1219,23,'ENG',-.5),[1255,52,`<span class="clock"><fit-text w="49">12:11 AM</fit-text><fit-text w="52">11/6/2024</fit-text></span>`],ic(1333,'note',17),rule(1361,40,'#7d8789')]));

def('desktop-app',`:host{display:flex;flex-direction:column;align-items:stretch;width:1366px;height:768px;background:#f9fbfd}`,
 `<tab-strip></tab-strip><address-bar></address-bar><docs-header></docs-header><docs-workspace></docs-workspace><task-bar></task-bar>`);
</script></body></html>
